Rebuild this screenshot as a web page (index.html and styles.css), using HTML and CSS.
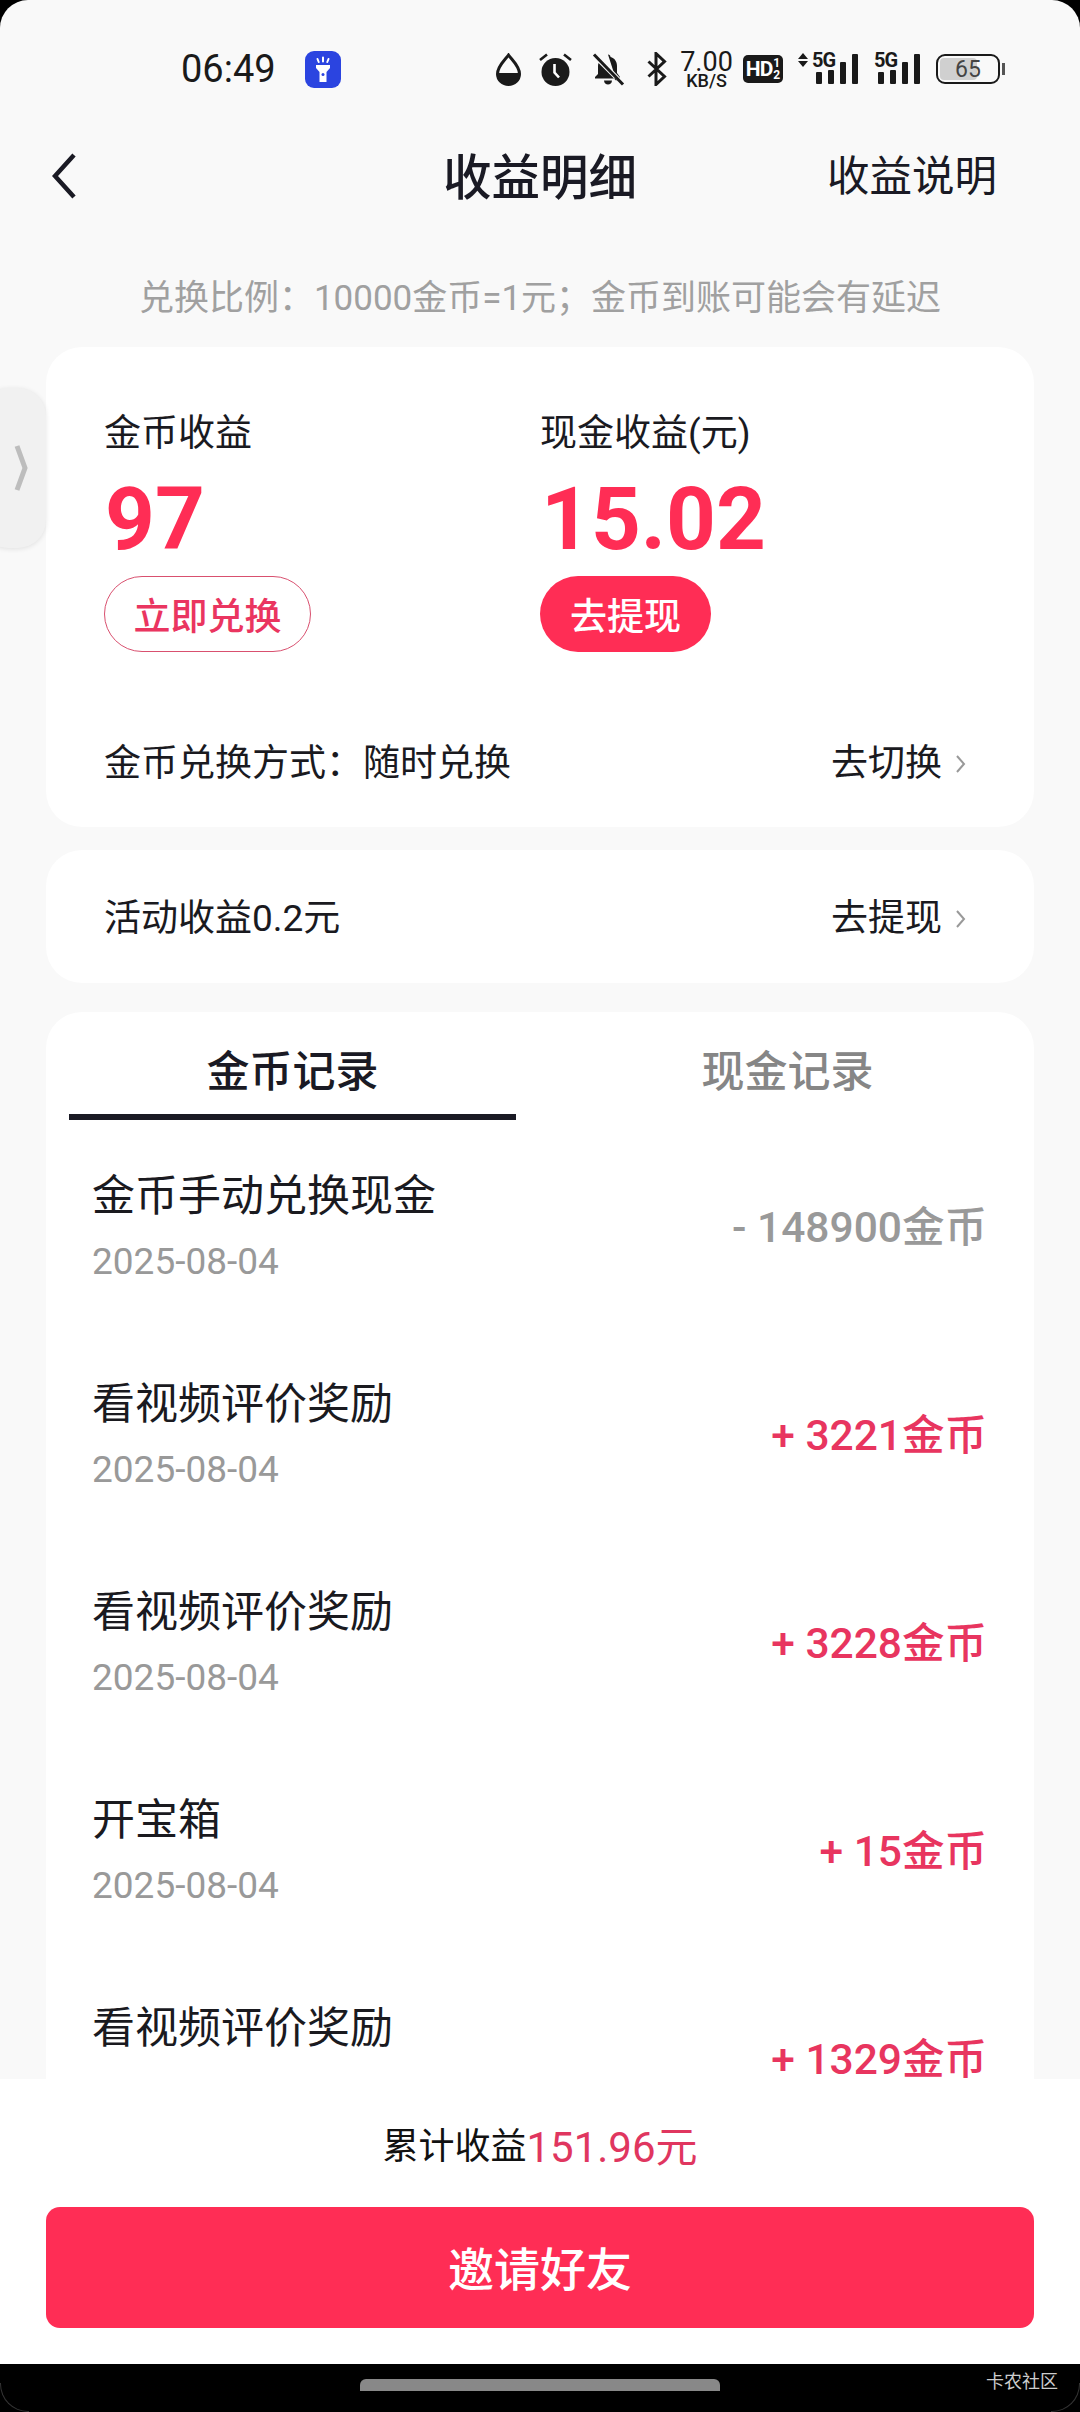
FILE: index.html
```html
<!DOCTYPE html>
<html lang="zh-CN">
<head>
  <meta charset="UTF-8">
  <meta name="viewport" content="width=device-width, initial-scale=1.0">
  <title>收益明细</title>
  <link rel="stylesheet" href="styles.css">
</head>
<body>
  <div class="screen">
    <div class="app">
      <div class="status-bar">
        <span class="time">06:49</span>
        <svg class="flash" width="36" height="37" viewBox="0 0 36 37">
          <rect width="36" height="37" rx="9" fill="#2b44e0"/>
          <path d="M11 14h14v3l-3.5 4v10h-7V21L11 17z" fill="#fff"/>
          <circle cx="18" cy="23.5" r="1.5" fill="#2b44e0"/>
          <path d="M18 6.5v4M12.5 8l1.2 3M23.5 8l-1.2 3" stroke="#fff" stroke-width="2" stroke-linecap="round"/>
        </svg>
        <div class="status-icons">
          <svg class="drop" width="25" height="33" viewBox="0 0 25 33">
            <path d="M12.5 2C9 7 1.5 13 1.5 21a11 10.500 0 0 0 22 0C23.500 13 16 7 12.500 2z" fill="#fafafa" stroke="#1a1a1a" stroke-width="3"/>
            <path d="M1.500 20h22v1a11 10.500 0 0 1-22 0z" fill="#1a1a1a"/>
          </svg>
          <svg class="alarm" width="33" height="33" viewBox="0 0 33 33">
            <circle cx="16.500" cy="19" r="14" fill="#1a1a1a"/>
            <path d="M15.500 11v8.500l4.500 5" fill="none" stroke="#fff" stroke-width="2.600"/>
            <path d="M1 7l7-5.500M32 7l-7-5.500" stroke="#1a1a1a" stroke-width="2.600"/>
          </svg>
          <svg class="bell" width="33" height="33" viewBox="0 0 33 33">
            <path d="M16 1.500c1.500 0 2.500 1 2.500 2.500 4 1 6.500 4.500 6.500 9v7l3 4v1.500H3V24l3-3V13c0-1 .2-2 .5-3l18 18z" fill="#1a1a1a"/>
            <path d="M12 27.500h8c0 2.500-2 4-4 4s-4-1.500-4-4z" fill="#1a1a1a"/>
            <path d="M6 3l26 27" stroke="#fafafa" stroke-width="1.500"/>
            <path d="M2 1.500l29 30" stroke="#1a1a1a" stroke-width="3"/>
          </svg>
          <svg class="bt" width="20" height="34" viewBox="0 0 20 34">
            <path d="M1.500 9.500l16 15L9 32.500V1.500l8.500 8-16 15" fill="none" stroke="#1a1a1a" stroke-width="3"/>
          </svg>
          <div class="speed"><span class="speed-num">7.00</span><span class="speed-unit">KB/S</span></div>
          <div class="hd"><span class="hd-main">HD</span><span class="hd-frac"><span>1</span><span>2</span></span></div>
          <svg class="sig sig-a" width="60" height="38" viewBox="0 -8 60 38">
            <path d="M5 -1l5 6H0zM5 13l5-6H0z" fill="#1a1a1a"/>
            <text class="sig-text" x="14" y="13">5G</text>
            <rect x="18" y="18" width="6" height="12" rx="1" fill="#1a1a1a"/>
            <rect x="30" y="16" width="6" height="14" rx="1" fill="#1a1a1a"/>
            <rect x="42" y="8" width="6" height="22" rx="1" fill="#1a1a1a"/>
            <rect x="54" y="0" width="6" height="30" rx="1" fill="#1a1a1a"/>
          </svg>
          <svg class="sig sig-b" width="47" height="38" viewBox="0 -8 47 38">
            <text class="sig-text" x="0" y="13">5G</text>
            <rect x="4" y="18" width="6" height="12" rx="1" fill="#1a1a1a"/>
            <rect x="16" y="16" width="6" height="14" rx="1" fill="#1a1a1a"/>
            <rect x="28" y="8" width="6" height="22" rx="1" fill="#1a1a1a"/>
            <rect x="40" y="0" width="6" height="30" rx="1" fill="#1a1a1a"/>
          </svg>
          <div class="battery"><span class="battery-fill"></span><span class="battery-num">65</span></div>
          <span class="battery-nub"></span>
        </div>
      </div>

      <header class="nav">
        <svg class="back" width="24" height="46" viewBox="0 0 24 46">
          <path d="M22 2L3 23l19 21" fill="none" stroke="#1a1a24" stroke-width="4.500"/>
        </svg>
        <h1 class="nav-title">收益明细</h1>
        <span class="nav-link">收益说明</span>
      </header>

      <p class="hint">兑换比例：10000金币=1元；金币到账可能会有延迟</p>

      <section class="card summary">
        <div class="earnings">
          <div class="earn-col earn-col-coin">
            <div class="earn-label">金币收益</div>
            <div class="earn-value">97</div>
            <span class="pill pill-outline">立即兑换</span>
          </div>
          <div class="earn-col">
            <div class="earn-label">现金收益(元)</div>
            <div class="earn-value">15.02</div>
            <span class="pill pill-solid">去提现</span>
          </div>
        </div>
        <div class="link-row">
          <span>金币兑换方式：随时兑换</span>
          <span class="link-action">去切换
            <svg class="chev" width="11" height="20" viewBox="0 0 11 20"><path d="M2 2l7 8-7 8" fill="none" stroke="#999" stroke-width="2"/></svg>
          </span>
        </div>
      </section>

      <section class="card activity">
        <div class="link-row">
          <span>活动收益0.2元</span>
          <span class="link-action">去提现
            <svg class="chev" width="11" height="20" viewBox="0 0 11 20"><path d="M2 2l7 8-7 8" fill="none" stroke="#999" stroke-width="2"/></svg>
          </span>
        </div>
      </section>

      <section class="card records">
        <div class="tabs">
          <div class="tab tab-active">金币记录</div>
          <div class="tab">现金记录</div>
        </div>
        <div class="record">
          <div>
            <div class="record-title">金币手动兑换现金</div>
            <div class="record-date">2025-08-04</div>
          </div>
          <div class="amount amount-out">- 148900金币</div>
        </div>
        <div class="record">
          <div>
            <div class="record-title">看视频评价奖励</div>
            <div class="record-date">2025-08-04</div>
          </div>
          <div class="amount">+ 3221金币</div>
        </div>
        <div class="record">
          <div>
            <div class="record-title">看视频评价奖励</div>
            <div class="record-date">2025-08-04</div>
          </div>
          <div class="amount">+ 3228金币</div>
        </div>
        <div class="record">
          <div>
            <div class="record-title">开宝箱</div>
            <div class="record-date">2025-08-04</div>
          </div>
          <div class="amount">+ 15金币</div>
        </div>
        <div class="record">
          <div>
            <div class="record-title">看视频评价奖励</div>
            <div class="record-date">2025-08-04</div>
          </div>
          <div class="amount">+ 1329金币</div>
        </div>
      </section>

      <!-- floating side handle -->
      <div class="side-handle">
        <svg width="14" height="48" viewBox="0 0 14 48"><path d="M3 2l8 22-8 22" fill="none" stroke="#bdbdbd" stroke-width="5"/></svg>
      </div>
    </div>

    <footer class="footer">
      <div class="total">累计收益<span class="total-num">151.96元</span></div>
      <div class="invite">邀请好友</div>
    </footer>

    <div class="gesture-bar">
      <span class="home-pill"></span>
      <span class="watermark">卡农社区</span>
    </div>
  </div>
</body>
</html>
```

FILE: styles.css
```css
* {
  box-sizing: border-box;
}

body {
  margin: 0;
  background-color: #000;
  font-family: Roboto, "Noto Sans CJK SC", sans-serif;
  color: #1a1a1f;
}

.screen {
  width: 1080px;
  height: 2412px;
  display: flex;
  flex-direction: column;
  background-color: #000;
}

.app {
  position: relative;
  flex: 1;
  min-height: 0;
  overflow: hidden;
  background-color: #f9f9f9;
  border-radius: 28px 28px 0 0;
}

/* status bar */
.status-bar {
  height: 138px;
  padding: 0 75px 0 181px;
  display: flex;
  align-items: center;
}

.time {
  font-size: 38px;
  color: #1a1a1a;
  line-height: 1;
}

.flash {
  margin-left: 29px;
}

.status-icons {
  margin-left: auto;
  display: flex;
  align-items: center;
}

.alarm {
  margin-left: 18px;
}

.bell {
  margin-left: 20px;
}

.bt {
  margin-left: 22px;
}

.speed {
  margin-left: 15px;
  width: 49px;
  display: flex;
  flex-direction: column;
  align-items: center;
  color: #1a1a1a;
}

.speed-num {
  font-size: 27px;
  line-height: 24px;
}

.speed-unit {
  font-size: 18px;
  line-height: 14px;
  font-weight: 500;
}

.hd {
  margin-left: 12px;
  width: 40px;
  height: 28px;
  background-color: #1a1a1a;
  border-radius: 5px;
  color: #fff;
  display: flex;
  align-items: center;
  justify-content: center;
  font-weight: 700;
}

.hd-main {
  font-size: 21px;
  letter-spacing: -1px;
}

.hd-frac {
  display: flex;
  flex-direction: column;
  font-size: 12px;
  line-height: 12px;
  margin-left: 1px;
}

.sig {
  margin-top: -8px;
}

.sig-a {
  margin-left: 15px;
}

.sig-b {
  margin-left: 16px;
}

.sig-text {
  font-family: Roboto, sans-serif;
  font-size: 20px;
  font-weight: 700;
  fill: #1a1a1a;
  letter-spacing: -1px;
}

.battery {
  position: relative;
  margin-left: 15px;
  width: 64px;
  height: 30px;
  border: 2.5px solid #1a1a1a;
  border-radius: 9px;
  display: flex;
  align-items: center;
  justify-content: center;
}

.battery-fill {
  position: absolute;
  left: 2px;
  top: 2px;
  bottom: 2px;
  width: 62%;
  background-color: #d0d0d0;
  border-radius: 4px;
}

.battery-num {
  position: relative;
  font-size: 23px;
  color: #444;
}

.battery-nub {
  margin-left: 2px;
  width: 3px;
  height: 12px;
  background-color: #555;
}

/* nav */
.nav {
  position: relative;
  height: 76px;
  padding-bottom: 4px;
  display: flex;
  align-items: center;
  justify-content: center;
}

.back {
  position: absolute;
  left: 52px;
  top: 15px;
}

.nav-title {
  margin: 0;
  font-size: 48.5px;
  font-weight: 500;
  color: #1a1a24;
}

.nav-link {
  position: absolute;
  right: 83px;
  top: 11px;
  font-size: 42.5px;
  line-height: 56px;
  color: #1a1a24;
}

.hint {
  margin: 60px 0 23px;
  height: 50px;
  line-height: 50px;
  text-align: center;
  font-size: 35px;
  color: #a0a0a0;
}

/* cards */
.card {
  margin: 0 46px;
  background-color: white;
  border-radius: 36px;
}

.summary {
  padding: 62px 68px 38px 58px;
}

.earnings {
  display: flex;
}

.earn-col {
  flex: 1;
}

.earn-col-coin {
  flex: 0 0 436px;
}

.earn-label {
  font-size: 37px;
  line-height: 50px;
}

.earn-value {
  margin: 10px 0 7px 1px;
  font-size: 87px;
  line-height: 100px;
  font-weight: 700;
  color: #ff2d55;
}

.pill {
  display: flex;
  align-items: center;
  justify-content: center;
  height: 76px;
  border-radius: 38px;
  font-size: 37px;
  font-weight: 500;
}

.pill-outline {
  width: 207px;
  border: 1px solid #d9506f;
  color: #ea3560;
}

.pill-solid {
  width: 171px;
  background-color: #ff2d55;
  color: white;
}

.link-row {
  display: flex;
  align-items: center;
  justify-content: space-between;
  font-size: 37px;
  line-height: 50px;
}

.summary .link-row {
  margin-top: 87px;
}

.link-action {
  display: flex;
  align-items: center;
  gap: 13px;
}

.activity {
  margin-top: 23px;
  height: 133px;
  padding: 4px 68px 0 58px;
  display: flex;
  flex-direction: column;
  justify-content: center;
}

.records {
  margin-top: 29px;
  padding-bottom: 40px;
}

.tabs {
  display: flex;
  gap: 48px;
  margin-bottom: 2px;
  padding: 0 23px;
}

.tab {
  flex: 1;
  padding: 30px 0 12px;
  border-bottom: 6px solid transparent;
  text-align: center;
  font-size: 43px;
  line-height: 60px;
  font-weight: 500;
  color: #868686;
}

.tab-active {
  color: #1a1a24;
  border-bottom-color: #1a1a24;
}

.record {
  height: 208px;
  padding: 0 47px 0 46px;
  display: flex;
  align-items: center;
  justify-content: space-between;
}

.record-title {
  font-size: 43px;
  line-height: 60px;
  color: #1a1a1f;
}

.record-date {
  margin-top: 11px;
  font-size: 37px;
  line-height: 50px;
  color: #999;
}

.amount {
  margin-bottom: 6px;
  font-size: 42.5px;
  font-weight: 500;
  color: #e8355f;
}

.amount-out {
  color: #999;
}

.side-handle {
  position: absolute;
  left: -20px;
  top: 388px;
  width: 66px;
  height: 160px;
  padding-left: 34px;
  background-color: #f1f1f1;
  border-radius: 28px;
  box-shadow: 0 1px 5px rgba(0, 0, 0, 0.1);
  display: flex;
  align-items: center;
}

/* footer */
.footer {
  height: 285px;
  padding: 34px 46px 0;
  background-color: white;
}

.total {
  height: 60px;
  display: flex;
  align-items: center;
  justify-content: center;
  font-size: 36px;
  color: #111;
}

.total-num {
  font-size: 42px;
  color: #e0365f;
}

.invite {
  margin-top: 34px;
  height: 121px;
  padding-bottom: 4px;
  display: flex;
  align-items: center;
  justify-content: center;
  background-color: #ff2d55;
  border-radius: 14px;
  color: white;
  font-size: 46px;
  font-weight: 500;
}

.gesture-bar {
  position: relative;
  height: 48px;
  overflow: hidden;
}

/* faint line where the phone corners were cut */
.gesture-bar::before,
.gesture-bar::after {
  content: "";
  position: absolute;
  bottom: 0;
  width: 28px;
  height: 28px;
  border-bottom: 1px solid #333;
}

.gesture-bar::before {
  left: 0;
  border-left: 1px solid #333;
  border-radius: 0 0 0 28px;
}

.gesture-bar::after {
  right: 0;
  border-right: 1px solid #333;
  border-radius: 0 0 28px 0;
}

.home-pill {
  position: absolute;
  left: 360px;
  top: 15px;
  width: 360px;
  height: 12px;
  background-color: #888;
  border-radius: 6px 6px 0 0;
}

.watermark {
  position: absolute;
  right: 22px;
  top: 6px;
  font-size: 18px;
  line-height: 24px;
  color: #ccc;
}
```
